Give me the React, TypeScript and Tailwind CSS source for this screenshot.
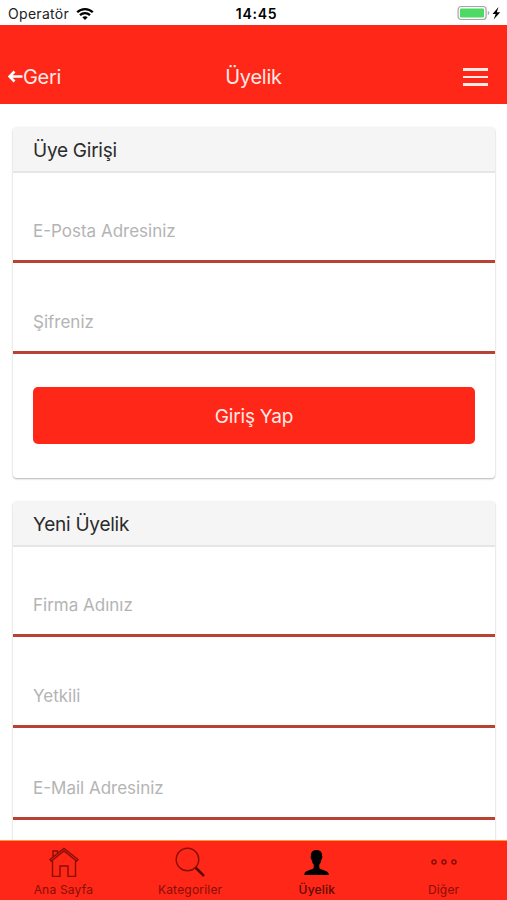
import React from "react";

function StatusBar() {
  return (
    <div className="grid h-[25px] grid-cols-3 items-center bg-white text-black">
      <div className="flex items-center gap-[7px] pl-[8px] pt-[2px] text-[14px] leading-none tracking-[0.3px] text-[#222]">
        <span>Operatör</span>
        <svg width="18" height="14" viewBox="0 0 18 14" fill="none" stroke="#000" strokeWidth="2.3">
          <path d="M1.2 5.3C5.5 1 12.5 1 16.8 5.3" />
          <path d="M4 8.2c2.8-2.7 7.200-2.700 10 0" />
          <path d="M6.300 10.200c1.600-1.400 3.800-1.400 5.400 0L9 13z" fill="#000" stroke="none" />
        </svg>
      </div>
      <div className="pl-[6px] pt-[2px] text-center text-[14px] font-semibold leading-none tracking-[0.7px]">14:45</div>
      <div className="flex items-center justify-end pr-[4px] pt-[1px]">
        <svg width="46" height="16" viewBox="0 0 46 16">
          <rect x="1.100" y="1.500" width="28" height="13" rx="3" fill="#fff" stroke="#a5a5a5" strokeWidth="1.200" />
          <rect x="3" y="3.500" width="24" height="9" rx="1" fill="#4cd964" />
          <path d="M30.800 6v4q1.500-.5 1.500-2t-1.500-2" fill="#a5a5a5" />
          <path d="M41.500 2l-6 7h3.200l-2 5.500 6.500-7.200h-3.400z" fill="#000" />
        </svg>
      </div>
    </div>
  );
}

function Header() {
  return (
    <header className="grid h-[78.500px] grid-cols-3 items-end bg-[#ff2717] pb-[14.500px] text-[20px] leading-[24px] text-[#ffe9e5]">
      <div className="flex items-center pl-[8px]">
        <svg width="15" height="14" viewBox="0 0 15 14" fill="none" stroke="#fff" strokeWidth="2.600">
          <path d="M14.500 6.500H2M6.500 1.500l-5 5 5 5" />
        </svg>
        <span className="tracking-[-0.3px]">Geri</span>
      </div>
      <div className="text-center tracking-[-0.25px]">Üyelik</div>
      <div className="flex h-[24px] items-center justify-end pr-[19px]">
        <div className="flex w-[25px] flex-col gap-[5px]">
          <i className="h-[2.500px] bg-[#ffe9e5]" />
          <i className="h-[2.500px] bg-[#ffe9e5]" />
          <i className="h-[2.500px] bg-[#ffe9e5]" />
        </div>
      </div>
    </header>
  );
}

function Card({ title, className, children }: { title: string; className: string; children?: React.ReactNode }) {
  return (
    <section
      className={`mx-[13px] mr-[12px] shrink-0 rounded-[4px] bg-white shadow-[0_1px_2px_rgba(0,0,0,0.3)] ${className}`}
    >
      <h2 className="h-[46px] rounded-t-[4px] border-b-2 border-[#e6e6e6] bg-[#f5f5f5] pl-[20px] text-[19px] font-normal leading-[48px] tracking-[-0.25px] text-[#2b2b2b]">
        {title}
      </h2>
      {children}
    </section>
  );
}

function Field({ label, first }: { label: string; first?: boolean }) {
  return (
    <div
      className={`flex items-end border-b-[3px] border-[#b84234] pb-[18px] pl-[20px] text-[17px] leading-[22px] text-[#b4b4b4] ${
        first ? "h-[89.500px]" : "h-[91.700px]"
      }`}
    >
      {label}
    </div>
  );
}

function Tab({ label, active, children }: { label: string; active?: boolean; children: React.ReactNode }) {
  return (
    <div
      className={`flex flex-1 flex-col items-center text-[12px] leading-[14px] ${
        active ? "font-medium text-[#5c0a05]" : "text-[#870f08]"
      }`}
    >
      <div className="flex h-[42px] items-center">{children}</div>
      <span className="tracking-[0.200px]">{label}</span>
    </div>
  );
}

export default function App() {
  return (
    <div className="flex h-[900px] w-[507px] flex-col overflow-hidden bg-white font-['Inter','Liberation_Sans',sans-serif]">
      <StatusBar />
      <Header />
      <main className="flex min-h-0 flex-1 flex-col gap-[23px] overflow-hidden pt-[23.500px]">
        <Card title="Üye Girişi" className="h-[351px]">
          <Field label="E-Posta Adresiniz" first />
          <Field label="Şifreniz" />
          <div className="px-[20px] pt-[33px]">
            <button className="block h-[57px] w-full rounded-[5px] bg-[#ff2717] pt-[3px] text-[19px] tracking-[-0.2px] text-[#ffe9e5]">
              Giriş Yap
            </button>
          </div>
        </Card>
        <Card title="Yeni Üyelik" className="h-[500px]">
          <Field label="Firma Adınız" first />
          <Field label="Yetkili" />
          <Field label="E-Mail Adresiniz" />
        </Card>
      </main>
      <nav className="flex h-[60px] shrink-0 border-t border-[#ff9a2e] bg-[#ff2717]">
        <Tab label="Ana Sayfa">
          <svg className="ml-[2px]" width="30" height="30" viewBox="0 0 30 30" fill="none" stroke="#870f08" strokeWidth="1.400">
            <path d="M1 12.500L15 1.500l14 11-1.300 1.500L15 4 2.300 14zM3.500 13.500V29.500H11V19h8V29.500h7.500V13.500M4 10V4h4.500v2.500" />
          </svg>
        </Tab>
        <Tab label="Kategoriler">
          <svg width="30" height="30" viewBox="0 0 30 30" fill="none" stroke="#870f08">
            <circle cx="12.500" cy="12.500" r="11.300" strokeWidth="1.400" />
            <path d="M20.500 20.500l8.500 8.500" stroke="#5c0a05" strokeWidth="2.500" />
          </svg>
        </Tab>
        <Tab label="Üyelik" active>
          <svg width="25" height="25" viewBox="0 0 25 25" fill="#000">
            <path d="M12.500 0C8.700 0 6.700 2.200 6.900 6c-.8 1 .1 3 .8 4 .3 2 1 3.500 2 4.600v3.200c-.4 1.400-2.700 1.800-5.300 2.600C1.700 21.200.4 22.300.2 25h24.600c-.2-2.700-1.500-3.800-4.200-4.600-2.600-.8-4.900-1.200-5.300-2.600v-3.200c1-1.100 1.700-2.600 2-4.600.7-1 1.600-3 .8-4 .2-3.800-1.800-6-5.600-6z" />
          </svg>
        </Tab>
        <Tab label="Diğer">
          <svg width="26" height="6" viewBox="0 0 26 6" fill="none" stroke="#870f08" strokeWidth="1.500">
            <circle cx="3" cy="3" r="2" />
            <circle cx="13" cy="3" r="2" />
            <circle cx="23" cy="3" r="2" />
          </svg>
        </Tab>
      </nav>
    </div>
  );
}
